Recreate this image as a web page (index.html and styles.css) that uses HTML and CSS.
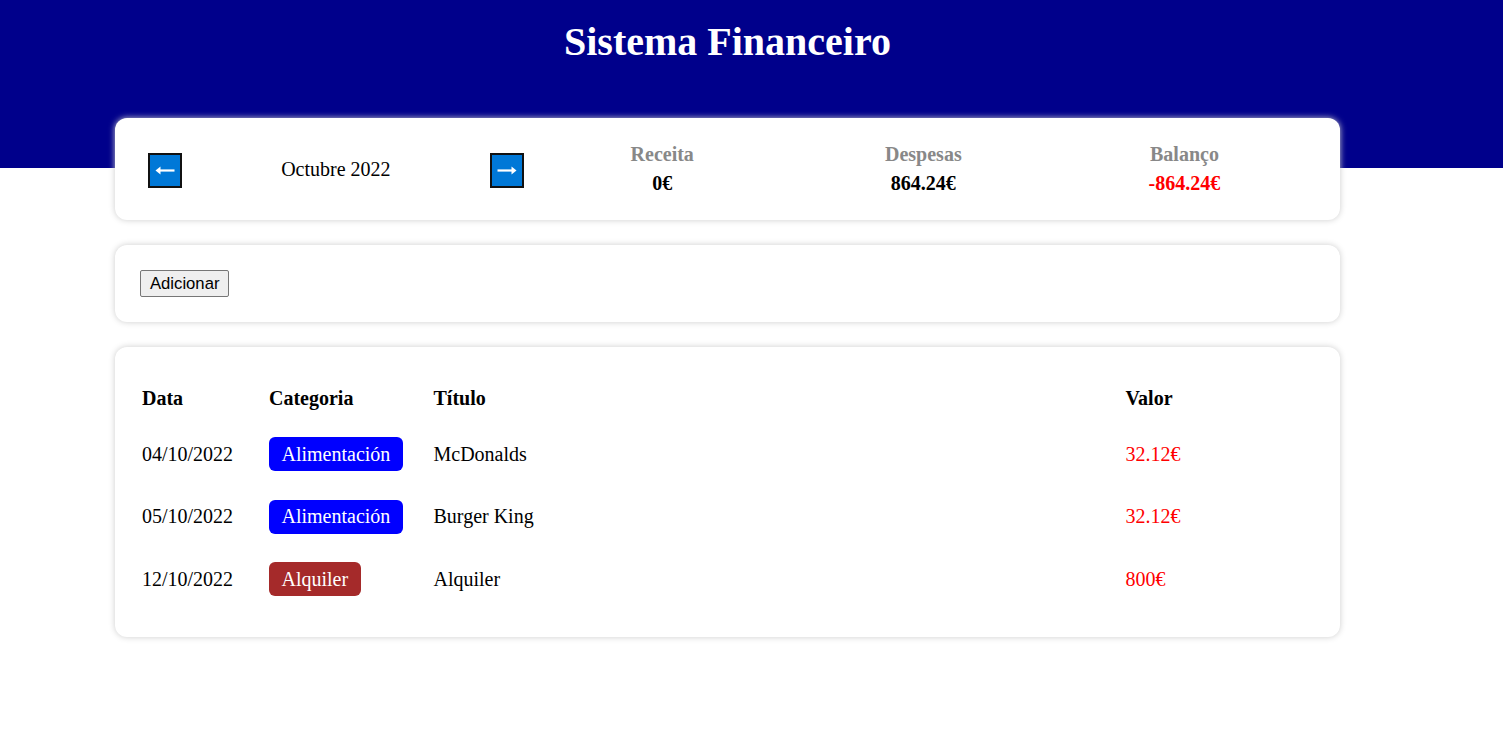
FILE: index.html
```html
<!DOCTYPE html>
<html lang="pt">
<head>
<meta charset="utf-8">
<title>Sistema Financeiro</title>
<link rel="stylesheet" href="styles.css">
</head>
<body>
<header class="header">
  <div class="page">
    <div class="container">
      <h1 class="header-title">Sistema Financeiro</h1>
    </div>
  </div>
</header>
<div class="page">
<main class="container body">
  <section class="card info-card">
    <div class="month-area">
      <div class="month-arrow" aria-label="Mês anterior">
        <svg width="34" height="35" viewBox="0 0 34 35">
          <rect x="1" y="1" width="32" height="33" fill="#0078d7" stroke="#111" stroke-width="2"/>
          <line x1="10" y1="17.5" x2="26.5" y2="17.5" stroke="#fff" stroke-width="2.2"/>
          <polygon points="7.5,17.5 12.5,13.5 12.5,21.5" fill="#fff"/>
        </svg>
      </div>
      <div class="month-title">Octubre 2022</div>
      <div class="month-arrow" aria-label="Próximo mês">
        <svg width="34" height="35" viewBox="0 0 34 35">
          <rect x="1" y="1" width="32" height="33" fill="#0078d7" stroke="#111" stroke-width="2"/>
          <line x1="7.5" y1="17.5" x2="24" y2="17.5" stroke="#fff" stroke-width="2.2"/>
          <polygon points="26.5,17.5 21.5,13.5 21.5,21.5" fill="#fff"/>
        </svg>
      </div>
    </div>
    <div class="resume-area">
      <div class="resume-item">
        <div class="resume-title">Receita</div>
        <div class="resume-info">0€</div>
      </div>
      <div class="resume-item">
        <div class="resume-title">Despesas</div>
        <div class="resume-info">864.24€</div>
      </div>
      <div class="resume-item">
        <div class="resume-title">Balanço</div>
        <div class="resume-info negative">-864.24€</div>
      </div>
    </div>
  </section>

  <section class="card input-card">
    <button class="add-button" type="button">Adicionar</button>
  </section>

  <table class="card table">
    <thead>
      <tr>
        <th class="col-date">Data</th>
        <th class="col-cat">Categoria</th>
        <th>Título</th>
        <th class="col-value">Valor</th>
      </tr>
    </thead>
    <tbody>
      <tr>
        <td>04/10/2022</td>
        <td><span class="category cat-food">Alimentación</span></td>
        <td>McDonalds</td>
        <td class="value expense">32.12€</td>
      </tr>
      <tr>
        <td>05/10/2022</td>
        <td><span class="category cat-food">Alimentación</span></td>
        <td>Burger King</td>
        <td class="value expense">32.12€</td>
      </tr>
      <tr>
        <td>12/10/2022</td>
        <td><span class="category cat-rent">Alquiler</span></td>
        <td>Alquiler</td>
        <td class="value expense">800€</td>
      </tr>
    </tbody>
  </table>
</main>
</div>
</body>
</html>
```

FILE: styles.css
```css
html, body {
  margin: 0;
  padding: 0;
}

body {
  font-family: "Liberation Serif", "Times New Roman", serif;
  font-size: 20px;
  color: #000;
  background: #fff;
}

.page {
  max-width: 1455px;
}

.container {
  max-width: 1225px;
  margin: 0 auto;
}

.header {
  background-color: #00008b;
  height: 168px;
}

.header-title {
  margin: 0;
  padding-top: 18px;
  text-align: center;
  color: #fff;
  font-size: 40px;
  font-weight: bold;
}

.body {
  margin-top: -50px;
  margin-bottom: 62px;
}

.card {
  background-color: #fff;
  box-shadow: 0 0 6px #ccc;
  border-radius: 12px;
}

.info-card {
  padding: 25px;
  display: flex;
  align-items: center;
}

.month-area {
  flex: 1;
  display: flex;
  align-items: center;
}

.month-arrow {
  width: 50px;
  display: flex;
  justify-content: center;
  padding-top: 3px;
}

.month-arrow:first-child svg {
  margin-left: -1px;
}

.month-arrow svg {
  display: block;
}

.month-title {
  flex: 1;
  text-align: center;
}

.resume-area {
  flex: 2;
  display: flex;
}

.resume-item {
  flex: 1;
  text-align: center;
  font-weight: bold;
}

.resume-title {
  color: #888;
  margin-bottom: 6px;
}

.negative {
  color: red;
}

.input-card {
  margin-top: 25px;
  padding: 25px;
}

.add-button {
  font-family: "Liberation Sans", Arial, sans-serif;
  font-size: 16.67px;
  height: 27px;
  padding: 0 9px;
  background: #efefef;
  border: 1px solid #767676;
  border-radius: 2px;
  color: #000;
  display: block;
}

.table {
  width: 100%;
  margin-top: 25px;
  padding: 25px;
  border-spacing: 2.5px;
}

.table th {
  padding: 12.5px 0;
  text-align: left;
  font-weight: bold;
}

.table td {
  padding: 0;
  height: 60.6px;
  vertical-align: middle;
}

.col-date { width: 125px; }
.col-cat { width: 162.5px; }
.col-value { width: 187.5px; }

.category {
  display: inline-block;
  padding: 5.5px 12.5px;
  border-radius: 6px;
  color: #fff;
}

.cat-food { background-color: blue; }
.cat-rent { background-color: brown; }

.expense { color: red; }
```
